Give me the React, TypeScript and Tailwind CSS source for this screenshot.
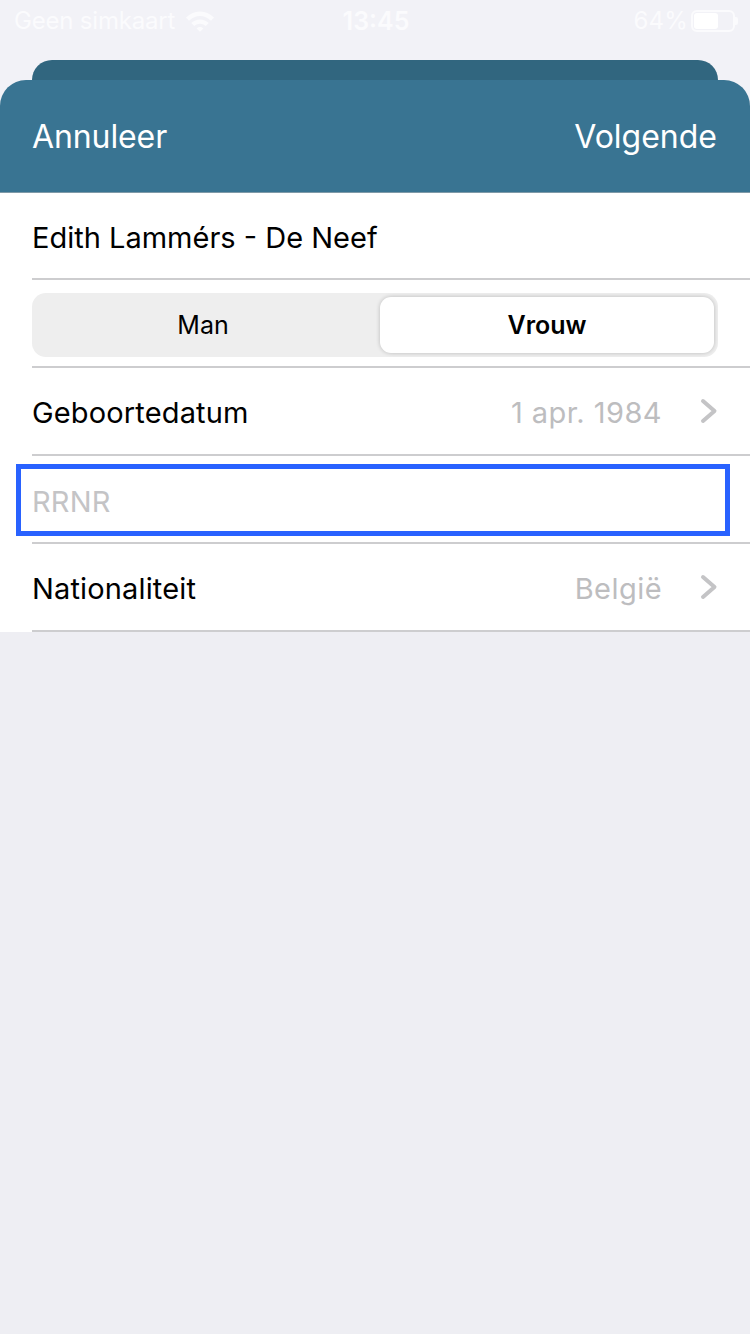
import React from "react";

const font = { fontFamily: "Inter, 'Liberation Sans', sans-serif" };

function Line() {
  return <div className="ml-8 h-[2px] bg-[#cdcdcf]" />;
}

function Chevron() {
  return (
    <svg width="18" height="26" viewBox="0 0 18 26" className="ml-[38px] shrink-0">
      <path d="M3 3 L14.5 13 L3 23" fill="none" stroke="#c4c4c6" strokeWidth="4" strokeLinecap="round" strokeLinejoin="round" />
    </svg>
  );
}

function Row({ label, value }: { label: string; value: string }) {
  return (
    <div className="flex h-[86px] items-center pl-8 pr-[32px]">
      <span className="flex-1 pt-[3px] text-[29px] leading-none tracking-[0.15px] text-black">{label}</span>
      <span className="pt-[3px] text-[29px] leading-none tracking-[0.45px] text-[#bdbdbf]">{value}</span>
      <Chevron />
    </div>
  );
}

export default function App() {
  return (
    <div style={font} className="flex min-h-[1334px] w-[750px] flex-col bg-[#eeeef3]">
      <div className="bg-[#f2f2f7]">
        <div className="flex h-[42px] items-center justify-between pl-[14px] pr-[12px] text-[24px] leading-none text-[#fbfbfd]">
          <div className="flex w-[280px] items-center gap-[10px] tracking-[-0.2px]">
            <span>Geen simkaart</span>
            <svg width="30" height="22" viewBox="0 0 30 22">
              <path d="M1 7.5 C9 -0.5 21 -0.5 29 7.5 L26 10.7 C19.5 4.3 10.5 4.3 4 10.7 Z M6.3 13 C11 8.3 19 8.3 23.7 13 L20.7 16.1 C17.4 13 12.6 13 9.3 16.1 Z M11.6 18.4 C13.6 16.6 16.4 16.6 18.4 18.4 L15 21.8 Z" fill="#fbfbfd" />
            </svg>
          </div>
          <span className="text-[25px] font-semibold">13:45</span>
          <div className="flex w-[280px] items-center justify-end gap-[3px] tracking-[0.2px]">
            <span>64%</span>
            <div className="flex items-center">
              <div className="flex h-[22px] w-[44px] items-center rounded-[6px] border-2 border-[#fbfbfd] p-[1px]">
                <div className="h-full w-[24px] rounded-[3px] bg-white" />
              </div>
              <div className="h-[8px] w-[3px] rounded-r-[2px] bg-[#fbfbfd]" />
            </div>
          </div>
        </div>
        <div className="h-[18px]" />
        <div className="mx-8 h-[20px] rounded-t-[20px] bg-[#31667f]" />
      </div>
      <div className="bg-[#f2f2f7]">
        <div className="flex h-[113px] items-center justify-between rounded-t-[26px] border-b border-b-[#7f9aa8] bg-[#397492] pl-[32px] pr-[33px] pt-[2px] text-[32px] leading-none text-white">
          <span className="tracking-[-0.1px]">Annuleer</span>
          <span>Volgende</span>
        </div>
      </div>
      <div className="bg-white">
        <div className="flex h-[85px] items-center pl-8 pt-[3px] text-[29px] leading-none text-black">Edith Lammérs - De Neef</div>
        <Line />
        <div className="mx-8 mt-[13px] mb-[9px] flex h-[64px] rounded-[14px] bg-[#eeeeee] p-[4px] text-[25px] leading-none text-black">
          <div className="flex w-[344px] items-center justify-center pr-[10px] pt-[1px]">Man</div>
          <div className="flex flex-1 items-center justify-center rounded-[11px] bg-white pt-[1px] font-semibold shadow-[0_0_4px_rgba(0,0,0,0.22)]">Vrouw</div>
        </div>
        <Line />
        <Row label="Geboortedatum" value="1 apr. 1984" />
        <Line />
        <div className="ml-4 mr-[20px] mt-[8px] mb-[6px] flex h-[72px] items-center border-[5px] border-[#2962ff] pl-[11px] pt-[3px] text-[29px] leading-none tracking-[0.2px] text-[#c4c4c6]">RRNR</div>
        <Line />
        <Row label="Nationaliteit" value="België" />
        <Line />
      </div>
    </div>
  );
}
